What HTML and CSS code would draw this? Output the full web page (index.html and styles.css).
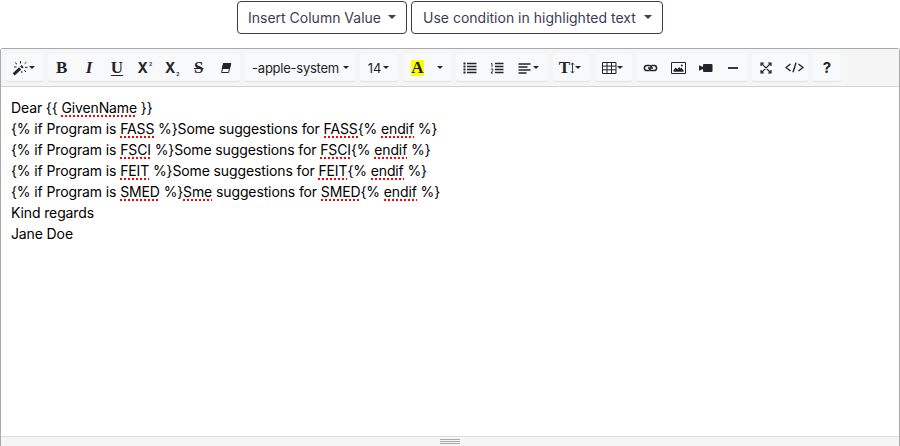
FILE: index.html
```
<!DOCTYPE html>
<html lang="en">
<head>
<meta charset="utf-8">
<title>Message editor</title>
<link rel="stylesheet" href="styles.css">
</head>
<body>
<div class="actions">
  <button class="action insert">Insert Column Value<i class="caret large"></i></button>
  <button class="action condition">Use condition in highlighted text<i class="caret large"></i></button>
</div>
<div class="editor">
  <div class="toolbar">
    <div class="group style">
      <button class="tool"><svg width="17" height="16" viewBox="0 0 17 16"><path d="M1.7 14.3 8.2 8.4" stroke-width="3"/><path d="m9.2 7.4 1.4-1.3" stroke-width="3"/><path d="M8.5 1v2.5M3 2.5l2 1.7M2 7h2.5M12.6 3.7l1.8-1.5M13 7.3h2.5M12.3 10l1.6 2M9.8 11v2" stroke-width="1"/></svg><i class="caret"></i></button>
    </div>
    <div class="group format">
      <button class="tool serif">B</button>
      <button class="tool serif italic">I</button>
      <button class="tool serif underline">U</button>
      <button class="tool script">X<sup>2</sup></button>
      <button class="tool script">X<sub>2</sub></button>
      <button class="tool serif strike">S</button>
      <button class="tool"><svg width="12" height="12" viewBox="0 0 12 12"><path d="M3.6 1.5h7L8.6 10.5h-7z"/><path class="solid" d="M3.2 1h8L9.800 7H1.800z"/></svg></button>
    </div>
    <div class="group family"><button class="tool">-apple-system<i class="caret"></i></button></div>
    <div class="group size"><button class="tool">14<i class="caret"></i></button></div>
    <div class="group color">
      <button class="tool serif"><span class="mark">A</span></button>
      <button class="tool more"><i class="caret"></i></button>
    </div>
    <div class="group para">
      <button class="tool"><svg width="14" height="12" viewBox="0 0 14 12"><path d="M4 1.5h9.5M4 4.5h9.5M4 7.5h9.5M4 10.5h9.5" stroke-width="1.6"/><path d="M.5 1.5h2M.5 4.5h2M.5 7.5h2M.5 10.5h2" stroke-width="2"/></svg></button>
      <button class="tool"><svg width="14" height="12" viewBox="0 0 14 12"><path d="M5 1.5h8.5M5 4.5h8.5M5 7.5h8.5M5 10.5h8.5" stroke-width="1.6"/><path d="M1 1.5h1V5M.8 7h2v1.8L1 11h2" stroke-width=".9"/></svg></button>
      <button class="tool wide"><svg width="13" height="12" viewBox="0 0 13 12"><path d="M.5 2h12M.5 5h9M.5 8h12M.5 11h8" stroke-width="1.5"/></svg><i class="caret"></i></button>
    </div>
    <div class="group height">
      <button class="tool serif"><span>T</span><svg width="5" height="12" viewBox="0 0 5 12"><path d="M2.500 1v10M.8 2.700l1.700-1.700 1.700 1.700M.8 9.300l1.700 1.700 1.700-1.700" stroke-width=".9"/></svg><i class="caret"></i></button>
    </div>
    <div class="group table">
      <button class="tool"><svg width="15" height="12" viewBox="0 0 15 12"><path d="M.5.5h13.500v11H.5zM.5 4.100H14M.5 7.800H14M5 .5v11M9.500.5v11" stroke-width="1"/></svg><i class="caret"></i></button>
    </div>
    <div class="group media">
      <button class="tool"><svg width="15" height="10" viewBox="0 0 15 10"><path d="M6.500 7.600H4a2.600 2.600 0 0 1 0-5.200h2.300c1.200 0 2 .8 2 1.800M8.500 2.400H11a2.600 2.600 0 0 1 0 5.200H8.700c-1.200 0-2-.8-2-1.800M5 5h5" stroke-width="1.500"/></svg></button>
      <button class="tool"><svg width="15" height="12" viewBox="0 0 15 12"><path d="M.5.5h14v11H.5z" stroke-width="1"/><path class="solid" d="M2.500 9.700V8l2.200-2.500 1.500 1.800 2-2.300 1.300 1.500 1-.8 2 2.500v1.500z"/><circle class="solid" cx="10.800" cy="3.400" r="1"/></svg></button>
      <button class="tool"><svg width="15" height="10" viewBox="0 0 15 10"><rect class="solid" x="5" y="1" width="9.500" height="8" rx="1"/><path class="solid" d="M1 2.300 5 4v2L1 7.700z"/></svg></button>
      <button class="tool"><svg width="10" height="2" viewBox="0 0 10 2"><path d="M0 1h10" stroke-width="1.800"/></svg></button>
    </div>
    <div class="group view">
      <button class="tool"><svg width="12" height="12" viewBox="0 0 12 12"><path d="m1.500 1.500 9 9M10.500 1.500l-9 9M1 4V1h3M8 1h3v3M1 8v3h3M8 11h3V8" stroke-width="1.200"/></svg></button>
      <button class="tool"><svg width="19" height="11" viewBox="0 0 19 11"><path d="M5.500 2 1 5.500 5.500 9M13.500 2 18 5.500 13.500 9M11 .8 8 10.200" stroke-width="1.400"/></svg></button>
    </div>
    <div class="group help"><button class="tool question">?</button></div>
  </div>
  <div class="document">
    <p>Dear {{ <u>GivenName</u> }}</p>
    <p>{% if Program is <u>FASS</u> %}Some suggestions for <u>FASS</u>{% <u>endif</u> %}</p>
    <p>{% if Program is <u>FSCI</u> %}Some suggestions for <u>FSCI</u>{% <u>endif</u> %}</p>
    <p>{% if Program is <u>FEIT</u> %}Some suggestions for <u>FEIT</u>{% <u>endif</u> %}</p>
    <p>{% if Program is <u>SMED</u> %}<u>Sme</u> suggestions for <u>SMED</u>{% <u>endif</u> %}</p>
    <p>Kind regards</p>
    <p>Jane Doe</p>
  </div>
  <div class="resize"><i></i><i></i><i></i></div>
</div>
</body>
</html>
```
FILE: styles.css
```
* { box-sizing: border-box; }
body { margin: 0; height: 446px; overflow: hidden; background: #fff; font-family: Inter, sans-serif; }
button { font: inherit; color: inherit; margin: 0; padding: 0; background: none; border: 0; }
.actions { display: flex; justify-content: center; gap: 4px; height: 48px; padding-top: 1px; }
.action { display: flex; align-items: center; justify-content: space-between; height: 33px; padding: 0 10px 0 11px; border: 1px solid #3b3c54; border-radius: 4px; color: #3b3c54; font-size: 14px; letter-spacing: 0; white-space: nowrap; }
.insert { width: 170px; padding-left: 10px; }
.condition { width: 252px; }
.caret { width: 0; height: 0; border: 3px solid transparent; border-top-color: currentColor; border-bottom: 0; flex: none; }
.caret.large { border-width: 4px 4px 0; margin-top: -2px; }
.editor { display: flex; flex-direction: column; height: 398px; border: 1px solid #a9a9a9; border-bottom: 0; border-radius: 3px 3px 0 0; }
.toolbar { display: flex; gap: 5px; height: 38px; padding: 5px; background: #f5f5f5; border-bottom: 1px solid #d3d3d3; color: #212529; }
.group { display: flex; height: 27px; border-radius: 3px; background: #f8f9fa; box-shadow: 0 1px 0 #dfe0e1; }
.tool { display: flex; flex: 1; align-items: center; justify-content: center; font-size: 13px; gap: 2px; white-space: nowrap; }
.tool svg { display: block; fill: none; stroke: currentColor; flex: none; }
.tool .solid { fill: currentColor; stroke: none; }
.style { width: 37px; }
.style .tool, .height .tool, .table .tool { gap: 0; padding-right: 3px; }
.format { width: 192px; }
.format .tool { flex: 0 0 27.4px; }
.family { width: 110px; }
.family .tool { gap: 4px; letter-spacing: -.25px; padding-left: 1px; }
.size { width: 38px; }
.size .tool { letter-spacing: -.2px; padding-right: 1px; }
.color { width: 48px; }
.more { flex: 0 0 22px; }
.color .serif { padding-left: 3px; }
.para { width: 92px; }
.height { width: 37px; }
.table { width: 37px; }
.media { width: 110px; }
.view { width: 56px; }
.help { width: 28px; }
.wide { flex: 0 0 37px; padding-right: 2px; }
.tool.serif { font-family: "Liberation Serif", serif; font-weight: bold; font-size: 17px; }
.italic { font-style: italic; }
.underline { text-decoration: underline; text-decoration-thickness: 1px; text-underline-offset: 2px; padding-left: 1px; }
.strike { text-decoration: line-through; text-decoration-thickness: 1px; }
.script { font-weight: 700; font-size: 14px; gap: 1px; padding-left: 2px; }
.script sup, .script sub { font-size: 5px; line-height: 6px; }
.script sup { align-self: flex-start; margin-top: 7px; }
.script sub { align-self: flex-end; margin-bottom: 4px; }
.mark { width: 13px; height: 16px; line-height: 16px; text-align: center; background: #ff0; }
.question { font-weight: 700; font-size: 15px; }
.document { flex: 1; padding: 10px; font-size: 14px; line-height: 21px; letter-spacing: -.12px; color: #000; white-space: nowrap; }
.document p { margin: 0; }
.document u { text-decoration: none; padding-bottom: 1px; background: repeating-linear-gradient(90deg, #f00 0 2px, transparent 2px 4px) left bottom / 100% 2px no-repeat; }
.resize { display: flex; flex-direction: column; align-items: center; gap: 1px; height: 10px; padding-top: 2px; background: #f5f5f5; border-top: 1px solid #ddd; }
.resize i { width: 20px; height: 1px; background: #a9a9a9; }
```
